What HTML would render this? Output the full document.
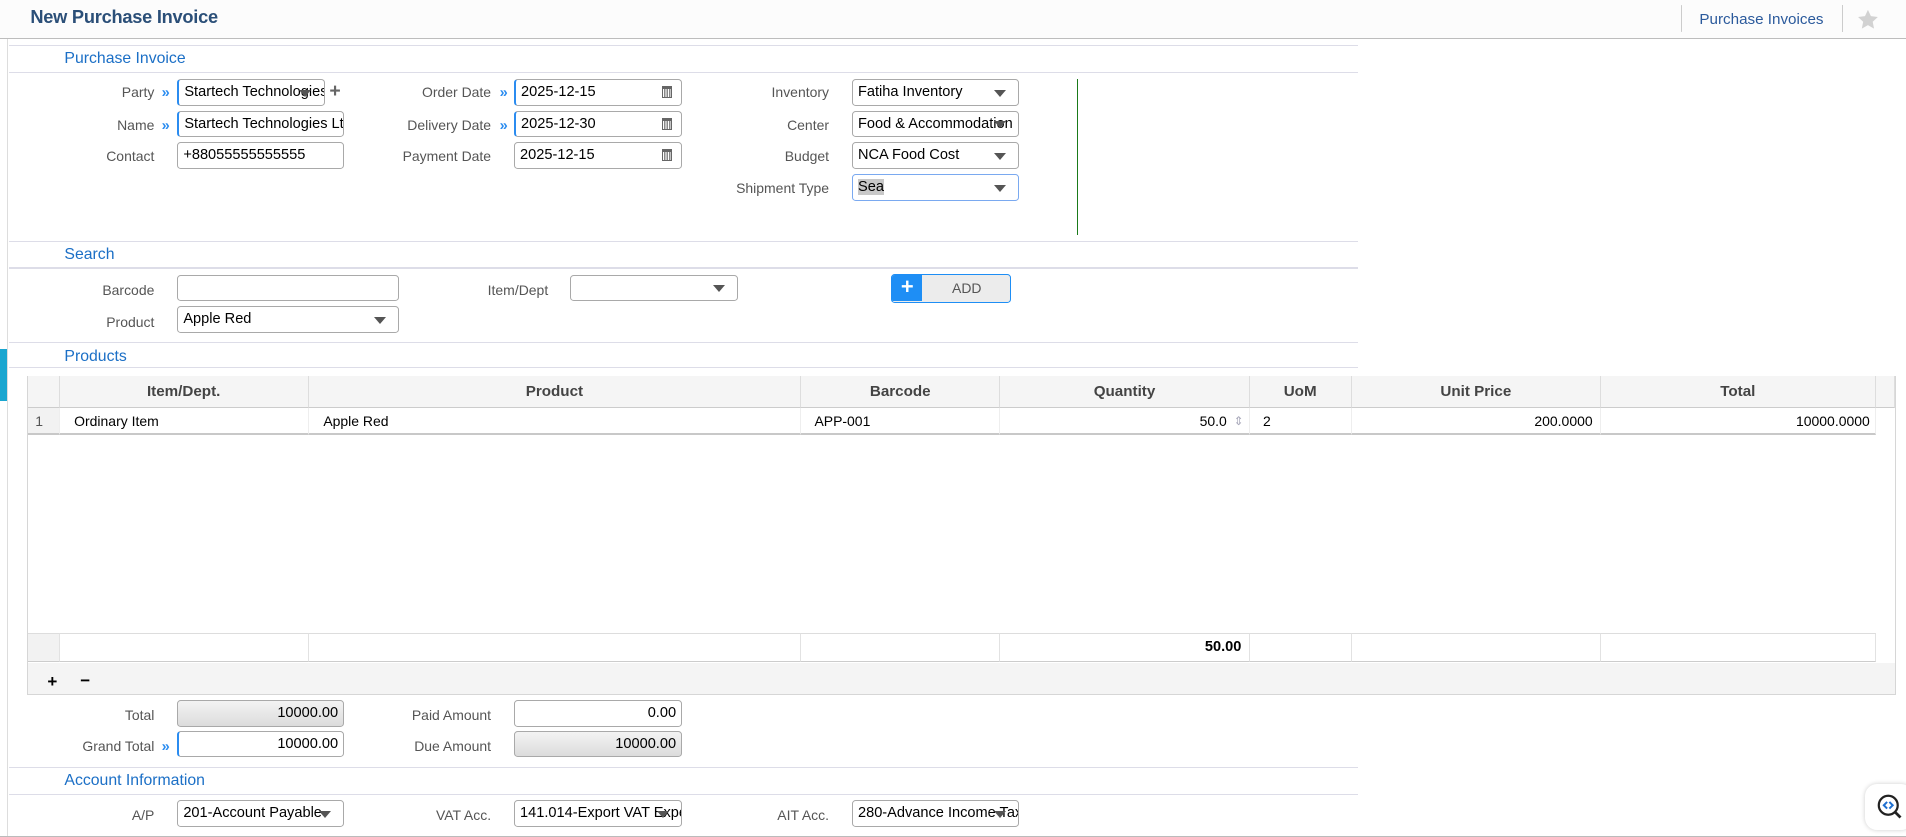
<!DOCTYPE html>
<html><head><meta charset="utf-8"><style>
html,body{margin:0;padding:0;background:#fff;overflow:hidden;width:1906px;height:837px}
#w{zoom:1.2156;width:1568px;height:689px;position:relative;font-family:"Liberation Sans",sans-serif;font-size:12px;color:#000}
.a{position:absolute}
.hdr{left:0;top:0;width:1568px;height:31px;background:#fcfcfc;border-bottom:1px solid #bdbdbd}
.ttl{left:25px;top:5px;font-size:15px;color:#2b4f78;font-weight:bold;letter-spacing:-0.2px}
.hl{height:1px;background:#dddde8;left:7px;width:1110px}
.sec{left:53px;font-size:13px;color:#1b6fc6}
.lb{text-align:right;color:#555;font-size:11.5px;width:120px}
.in{border:1px solid #a9a9a9;border-radius:3px;height:22px;box-sizing:border-box;background:#fff;padding:0 4px;line-height:21px;font-size:12px;white-space:nowrap;overflow:hidden}
.req{border-left:2px solid #2b8cf0}
.ar{color:#2b8cf0;font-size:12px;font-weight:bold}
.dd::after{content:"";position:absolute;right:10px;top:8px;border-left:5px solid transparent;border-right:5px solid transparent;border-top:6px solid #555}
.cal{position:absolute;right:7px;top:5px;width:9px;height:10px;border:1px solid #666;border-top-width:3px;box-sizing:border-box;background:repeating-linear-gradient(90deg,#fff 0 1px,#888 1px 2px)}
.gr{background:linear-gradient(#f3f3f3,#dcdcdc);text-align:right}
.th{top:309px;height:27px;background:#f5f5f5;border-right:1px solid #ddd;border-bottom:1px solid #ccc;box-sizing:border-box;text-align:center;font-weight:bold;color:#444;line-height:27px;font-size:12.5px}
.td{top:336px;height:22px;border-right:1px solid #eee;border-bottom:2px solid #c8c8c8;box-sizing:border-box;line-height:22px;padding:0 6px;font-size:11.5px}
.tf{top:521px;height:24px;border-right:1px solid #e2e2e2;border-top:1px solid #ddd;border-bottom:1px solid #ccc;box-sizing:border-box;line-height:22px;padding:0 6px}
</style></head><body><div id="w">
<div class="a" style="left:6px;top:31px;width:1px;height:658px;background:#ddd"></div>
<div class="a" style="left:0;top:287px;width:6px;height:43px;background:#1aa6d0"></div>
<div class="a hdr"></div>
<div class="a ttl">New Purchase Invoice</div>
<div class="a" style="left:1383px;top:4px;width:1px;height:22px;background:#ccc;border-radius:3px"></div>
<div class="a" style="left:1398px;top:9px;font-size:12.5px;color:#2b5a9c">Purchase Invoices</div>
<div class="a" style="left:1515px;top:4px;width:1px;height:22px;background:#ccc"></div>
<svg class="a" style="left:1528px;top:7px" width="18" height="17" viewBox="0 0 24 23"><path d="M12 1l3.3 7 7.7.9-5.7 5.3 1.5 7.6L12 18l-6.8 3.8 1.5-7.6L1 8.9 8.7 8z" fill="#d2d2d2"/></svg>
<div class="a" style="left:0;top:688px;width:1568px;height:1px;background:#bbb"></div>

<div class="a hl" style="top:37px"></div>
<div class="a sec" style="top:41px">Purchase Invoice</div>
<div class="a hl" style="top:59px"></div>

<div class="a lb" style="left:7px;top:69px">Party</div><div class="a ar" style="left:133px;top:70px">»</div>
<div class="a in req dd" style="left:146px;top:65px;width:121px;padding-right:16px">Startech Technologies</div>
<div class="a" style="left:271px;top:66px;font-size:16px;font-weight:bold;color:#666">+</div>
<div class="a lb" style="left:7px;top:96px">Name</div><div class="a ar" style="left:133px;top:97px">»</div>
<div class="a in req" style="left:146px;top:91px;width:137px">Startech Technologies Ltd</div>
<div class="a lb" style="left:7px;top:122px">Contact</div>
<div class="a in" style="left:146px;top:117px;width:137px">+88055555555555</div>

<div class="a lb" style="left:284px;top:69px">Order Date</div><div class="a ar" style="left:411px;top:70px">»</div>
<div class="a in req" style="left:423px;top:65px;width:138px">2025-12-15<span class="cal"></span></div>
<div class="a lb" style="left:284px;top:96px">Delivery Date</div><div class="a ar" style="left:411px;top:97px">»</div>
<div class="a in req" style="left:423px;top:91px;width:138px">2025-12-30<span class="cal"></span></div>
<div class="a lb" style="left:284px;top:122px">Payment Date</div>
<div class="a in" style="left:423px;top:117px;width:138px">2025-12-15<span class="cal"></span></div>

<div class="a lb" style="left:562px;top:69px">Inventory</div>
<div class="a in dd" style="left:701px;top:65px;width:137px">Fatiha Inventory</div>
<div class="a lb" style="left:562px;top:96px">Center</div>
<div class="a in dd" style="left:701px;top:91px;width:137px;padding-right:14px">Food &amp; Accommodation</div>
<div class="a lb" style="left:562px;top:122px">Budget</div>
<div class="a in dd" style="left:701px;top:117px;width:137px">NCA Food Cost</div>
<div class="a lb" style="left:562px;top:148px">Shipment Type</div>
<div class="a in dd" style="left:701px;top:143px;width:137px;border-color:#7aa9f0"><span style="background:#c8c8c8">Sea</span></div>
<div class="a" style="left:886px;top:65px;width:1px;height:128px;background:#1a7a1a"></div>

<div class="a hl" style="top:198px"></div>
<div class="a sec" style="top:202px">Search</div>
<div class="a hl" style="top:220px"></div>
<div class="a lb" style="left:7px;top:232px">Barcode</div>
<div class="a in" style="left:146px;top:226px;width:182px"></div>
<div class="a lb" style="left:331px;top:232px">Item/Dept</div>
<div class="a in dd" style="left:469px;top:226px;width:138px"></div>
<div class="a" style="left:733px;top:225px;width:99px;height:24px;border:1px solid #1e8ef5;border-radius:3px;box-sizing:border-box;background:#ececec;overflow:hidden">
<div class="a" style="left:0;top:0;width:25px;height:22px;background:#1e8ef5;color:#fff;font-size:18px;font-weight:bold;text-align:center;line-height:20px">+</div>
<div class="a" style="left:25px;top:0;width:73px;text-align:center;line-height:22px;color:#555;font-size:11.5px">ADD</div></div>
<div class="a lb" style="left:7px;top:258px">Product</div>
<div class="a in dd" style="left:146px;top:252px;width:182px">Apple Red</div>

<div class="a hl" style="top:281px"></div>
<div class="a sec" style="top:286px">Products</div>
<div class="a hl" style="top:302px"></div>

<div class="a" style="left:22px;top:309px;width:1538px;height:263px;border:1px solid #d6d6d6;box-sizing:border-box"></div>
<div class="a th" style="left:23px;width:26px"></div>
<div class="a th" style="left:49px;width:205px">Item/Dept.</div>
<div class="a th" style="left:254px;width:405px">Product</div>
<div class="a th" style="left:659px;width:164px">Barcode</div>
<div class="a th" style="left:823px;width:205px">Quantity</div>
<div class="a th" style="left:1028px;width:84px">UoM</div>
<div class="a th" style="left:1112px;width:205px">Unit Price</div>
<div class="a th" style="left:1317px;width:226px">Total</div>
<div class="a th" style="left:1543px;width:16px"></div>
<div class="a td" style="left:23px;width:26px;background:#f2f2f2;color:#555">1</div>
<div class="a td" style="left:49px;width:205px;padding-left:12px">Ordinary Item</div>
<div class="a td" style="left:254px;width:405px;padding-left:12px">Apple Red</div>
<div class="a td" style="left:659px;width:164px;padding-left:11px">APP-001</div>
<div class="a td" style="left:823px;width:205px;text-align:right;padding-right:18px">50.0<span style="position:absolute;right:4px;top:0;color:#aab;font-size:10px">⇕</span></div>
<div class="a td" style="left:1028px;width:84px;padding-left:11px">2</div>
<div class="a td" style="left:1112px;width:205px;text-align:right">200.0000</div>
<div class="a td" style="left:1317px;width:226px;text-align:right;padding-right:4px">10000.0000</div>
<div class="a tf" style="left:23px;width:26px;background:#f2f2f2"></div>
<div class="a tf" style="left:49px;width:205px"></div>
<div class="a tf" style="left:254px;width:405px"></div>
<div class="a tf" style="left:659px;width:164px"></div>
<div class="a tf" style="left:823px;width:205px;text-align:right;font-weight:bold">50.00</div>
<div class="a tf" style="left:1028px;width:84px"></div>
<div class="a tf" style="left:1112px;width:205px"></div>
<div class="a tf" style="left:1317px;width:226px"></div>
<div class="a" style="left:23px;top:545px;width:1536px;height:26px;background:#f4f4f4"></div>
<div class="a" style="left:39px;top:553px;font-weight:bold;font-size:14px">+</div>
<div class="a" style="left:66px;top:552px;font-weight:bold;font-size:14px">−</div>

<div class="a lb" style="left:7px;top:582px">Total</div>
<div class="a in gr" style="left:146px;top:576px;width:137px">10000.00</div>
<div class="a lb" style="left:7px;top:607px">Grand Total</div><div class="a ar" style="left:133px;top:608px">»</div>
<div class="a in req" style="left:146px;top:601px;width:137px;text-align:right">10000.00</div>
<div class="a lb" style="left:284px;top:582px">Paid Amount</div>
<div class="a in" style="left:423px;top:576px;width:138px;text-align:right">0.00</div>
<div class="a lb" style="left:284px;top:607px">Due Amount</div>
<div class="a in gr" style="left:423px;top:601px;width:138px">10000.00</div>

<div class="a hl" style="top:631px"></div>
<div class="a sec" style="top:635px">Account Information</div>
<div class="a hl" style="top:653px"></div>
<div class="a lb" style="left:7px;top:664px">A/P</div>
<div class="a in dd" style="left:146px;top:658px;width:137px;padding-right:14px">201-Account Payable</div>
<div class="a lb" style="left:284px;top:664px">VAT Acc.</div>
<div class="a in dd" style="left:423px;top:658px;width:138px;padding-right:14px">141.014-Export VAT Expense</div>
<div class="a lb" style="left:562px;top:664px">AIT Acc.</div>
<div class="a in dd" style="left:701px;top:658px;width:137px;padding-right:14px">280-Advance Income Tax</div>

<div class="a" style="left:1534px;top:645px;width:40px;height:38px;background:#fff;border-radius:10px;box-shadow:0 0 4px rgba(0,0,0,.2)"></div>
<svg class="a" style="left:1543px;top:652px" width="22" height="22" viewBox="0 0 24 24"><circle cx="11" cy="11" r="8.5" fill="none" stroke="#222" stroke-width="2"/><path d="M17 17l5 5" stroke="#222" stroke-width="2.5"/><path d="M10 8l-3 3 3 3M12 8l3 3-3 3" fill="none" stroke="#1e6fd0" stroke-width="1.8"/></svg>
</div></body></html>
